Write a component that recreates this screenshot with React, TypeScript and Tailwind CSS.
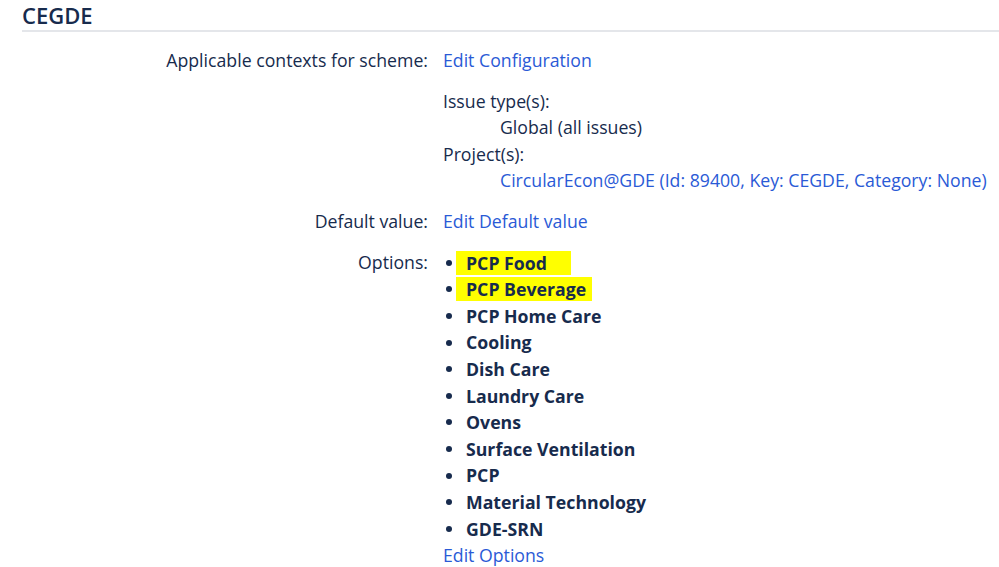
const options = [
  { name: "PCP Food", mark: "w-[115px]" },
  { name: "PCP Beverage", mark: "w-[136px]" },
  { name: "PCP Home Care" },
  { name: "Cooling" },
  { name: "Dish Care" },
  { name: "Laundry Care" },
  { name: "Ovens" },
  { name: "Surface Ventilation" },
  { name: "PCP" },
  { name: "Material Technology" },
  { name: "GDE-SRN" },
];

function Row({ label, children }: { label: string; children: React.ReactNode }) {
  return (
    <div className="grid grid-cols-[406px_1fr] gap-x-[15px]">
      <div className="text-right">{label}</div>
      <div>{children}</div>
    </div>
  );
}

export default function App() {
  return (
    <div
      className="min-h-screen bg-white text-[#172b4d] text-[17.7px] leading-[26.6px] pl-[22px]"
      style={{ fontFamily: '"Open Sans", "Noto Sans", sans-serif' }}
    >
      <h2 className="pt-[2px] pb-[2px] border-b-2 border-[#e4e6ea] text-[22px] leading-[26px] font-semibold">
        CEGDE
      </h2>

      <div className="flex flex-col gap-[14px] pt-[15px]">
        <Row label="Applicable contexts for scheme:">
          <a className="text-[#2a5ad6]">Edit Configuration</a>
        </Row>

        <Row label="">
          <div>Issue type(s):</div>
          <div className="pl-[57px]">Global (all issues)</div>
          <div>Project(s):</div>
          <div className="pl-[57px]">
            <a className="text-[#2a5ad6]">CircularEcon@GDE (Id: 89400, Key: CEGDE, Category: None)</a>
          </div>
        </Row>

        <Row label="Default value:">
          <a className="text-[#2a5ad6]">Edit Default value</a>
        </Row>

        <Row label="Options:">
          <ul className="pt-[1px]">
            {options.map((o) => (
              <li key={o.name} className="flex items-center h-[26.6px]">
                <span className="w-[23px] shrink-0 flex items-center pl-[3px]">
                  <span className="w-[6px] h-[6px] rounded-full bg-[#172b4d]" />
                </span>
                <span
                  className={
                    o.mark
                      ? `font-bold bg-[#ffff00] -ml-[10px] pl-[10px] leading-[24px] ${o.mark}`
                      : "font-bold"
                  }
                >
                  {o.name}
                </span>
              </li>
            ))}
          </ul>
          <a className="text-[#2a5ad6]">Edit Options</a>
        </Row>
      </div>
    </div>
  );
}
